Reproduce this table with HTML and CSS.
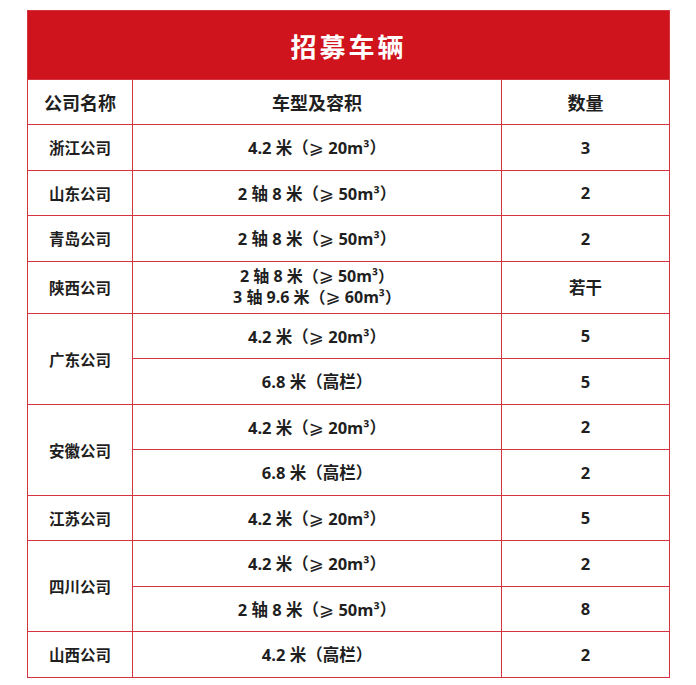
FILE: index.html
```html
<!DOCTYPE html>
<html lang="zh-CN">
<head>
<meta charset="utf-8">
<title>招募车辆</title>
<link rel="stylesheet" href="styles.css">
</head>
<body>
<table class="recruit">
  <colgroup>
    <col class="c-company">
    <col class="c-type">
    <col class="c-qty">
  </colgroup>
  <thead>
    <tr class="title-row"><th colspan="3" class="title">招募车辆</th></tr>
    <tr class="head-row"><th>公司名称</th><th>车型及容积</th><th>数量</th></tr>
  </thead>
  <tbody>
    <tr><td class="co">浙江公司</td><td>4.2 米（<span class="ge">⩾</span> 20m³）</td><td>3</td></tr>
    <tr><td class="co">山东公司</td><td>2 轴 8 米（<span class="ge">⩾</span> 50m³）</td><td>2</td></tr>
    <tr><td class="co">青岛公司</td><td>2 轴 8 米（<span class="ge">⩾</span> 50m³）</td><td>2</td></tr>
    <tr class="tall"><td class="co">陕西公司</td><td class="multi"><span class="line">2 轴 8 米（<span class="ge">⩾</span> 50m³）</span><span class="line">3 轴 9.6 米（<span class="ge">⩾</span> 60m³）</span></td><td>若干</td></tr>
    <tr><td class="co" rowspan="2">广东公司</td><td>4.2 米（<span class="ge">⩾</span> 20m³）</td><td>5</td></tr>
    <tr><td>6.8 米（高栏）</td><td>5</td></tr>
    <tr><td class="co" rowspan="2">安徽公司</td><td>4.2 米（<span class="ge">⩾</span> 20m³）</td><td>2</td></tr>
    <tr><td>6.8 米（高栏）</td><td>2</td></tr>
    <tr><td class="co">江苏公司</td><td>4.2 米（<span class="ge">⩾</span> 20m³）</td><td>5</td></tr>
    <tr><td class="co" rowspan="2">四川公司</td><td>4.2 米（<span class="ge">⩾</span> 20m³）</td><td>2</td></tr>
    <tr><td>2 轴 8 米（<span class="ge">⩾</span> 50m³）</td><td>8</td></tr>
    <tr><td class="co">山西公司</td><td>4.2 米（高栏）</td><td>2</td></tr>
  </tbody>
</table>
</body>
</html>
```
FILE: styles.css
```css
html, body {
  margin: 0;
  padding: 0;
  background: #ffffff;
}

body {
  padding: 10px 0 0 27px;
  font-family: "Open Sans", "Noto Sans CJK SC", "DejaVu Sans", sans-serif;
  color: #1f1f1f;
}

.recruit {
  border-collapse: collapse;
  width: 642px;
  table-layout: fixed;
}

.c-company { width: 105px; }
.c-type { width: 369px; }
.c-qty { width: 168px; }

.recruit th,
.recruit td {
  border: 1px solid #d4343f;
  text-align: center;
  vertical-align: middle;
  padding: 0;
  font-weight: 700;
}

.title-row { height: 69px; }

.title {
  background: #d0141d;
  color: #ffffff;
  font-family: "Noto Sans CJK SC", sans-serif;
  font-size: 26px;
  letter-spacing: 3px;
  border-color: #d0141d;
}

.head-row { height: 45px; }

.head-row th {
  font-family: "Noto Sans CJK SC", sans-serif;
  font-size: 18px;
}

.recruit tbody tr { height: 45.5px; }
.recruit tbody tr.tall { height: 52px; }

.recruit td {
  font-size: 16.5px;
}

.recruit td.co {
  font-family: "Noto Sans CJK SC", sans-serif;
  font-size: 15.5px;
}

.ge {
  font-family: "DejaVu Sans", sans-serif;
  font-weight: 400;
  font-size: 18px;
  line-height: 1;
}

.multi .line {
  display: block;
  font-size: 16px;
  line-height: 21px;
}
```
